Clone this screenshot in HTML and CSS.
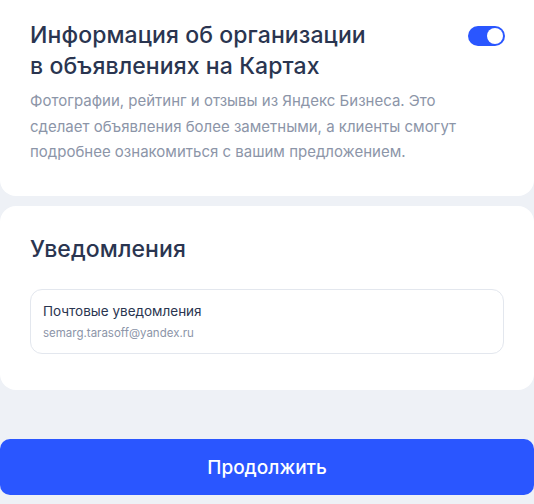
FILE: index.html
```html
<!DOCTYPE html>
<html lang="ru">
<head>
<meta charset="utf-8">
<link rel="stylesheet" href="styles.css">
</head>
<body>
<div class="page">
  <section class="card card-top">
    <div class="head-row">
      <h2 class="title">Информация об организации<br>в объявлениях на Картах</h2>
      <div class="toggle"><span class="knob"></span></div>
    </div>
    <p class="desc">Фотографии, рейтинг и отзывы из Яндекс Бизнеса. Это сделает объявления более заметными, а клиенты смогут подробнее ознакомиться с вашим предложением.</p>
  </section>
  <section class="card card-notify">
    <h2 class="title">Уведомления</h2>
    <div class="field">
      <div class="field-label">Почтовые уведомления</div>
      <div class="field-value">semarg.tarasoff@yandex.ru</div>
    </div>
  </section>
  <button class="btn">Продолжить</button>
</div>
</body>
</html>
```
FILE: styles.css
```css
html, body {
  margin: 0;
  padding: 0;
  background: #eef1f6;
}
body {
  font-family: Inter, "Noto Sans", "Liberation Sans", sans-serif;
  width: 534px;
  height: 504px;
  overflow: hidden;
}
.page {
  display: flex;
  flex-direction: column;
}
.card {
  background: #fff;
  box-sizing: border-box;
  padding: 0 30px;
}
.card-top {
  height: 196px;
  border-radius: 0 0 16px 16px;
  padding-top: 20px;
}
.head-row {
  display: flex;
  justify-content: space-between;
  align-items: flex-start;
}
.title {
  margin: 0;
  font-size: 23px;
  font-weight: 500;
  line-height: 31px;
  color: #2a3550;
  letter-spacing: 0.1px;
}
.toggle {
  width: 37px;
  height: 20px;
  border-radius: 10px;
  background: #2a56ff;
  margin-top: 6px;
  margin-right: -1px;
  position: relative;
}
.knob {
  position: absolute;
  right: 2px;
  top: 2px;
  width: 16px;
  height: 16px;
  border-radius: 50%;
  background: #fff;
}
.desc {
  margin: 6px 0 0;
  font-size: 15px;
  line-height: 25.5px;
  color: #8c95a8;
  font-weight: 400;
  max-width: 440px;
}
.card-notify {
  margin-top: 10px;
  height: 184px;
  border-radius: 16px;
  padding-top: 28px;
}
.field {
  margin-top: 24px;
  border: 1px solid #e3e7ee;
  border-radius: 12px;
  height: 65px;
  box-sizing: border-box;
  padding: 11px 12px 0;
}
.field-label {
  font-size: 13.5px;
  line-height: 20px;
  color: #2a3550;
}
.field-value {
  font-size: 11.5px;
  line-height: 18px;
  color: #8c95a8;
  margin-top: 3px;
}
.btn {
  margin-top: 49px;
  height: 56px;
  border: none;
  border-radius: 10px;
  background: #2a56ff;
  color: #fff;
  font-family: inherit;
  font-size: 19px;
  font-weight: 500;
  width: 534px;
  padding: 0;
}
```
